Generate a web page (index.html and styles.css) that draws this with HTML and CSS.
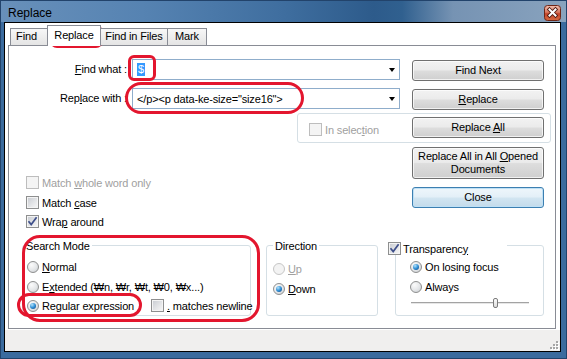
FILE: index.html
```html
<!DOCTYPE html>
<html>
<head>
<meta charset="utf-8">
<link rel="stylesheet" href="styles.css">
</head>
<body>
<div class="window">
  <div class="titlebar">
    <span class="title">Replace</span>
    <span class="close">
      <svg width="17" height="16" viewBox="0 0 17 16">
        <defs>
          <linearGradient id="cg" x1="0" y1="0" x2="0" y2="1">
            <stop offset="0" stop-color="#f2c0b2"/>
            <stop offset="0.45" stop-color="#d9785f"/>
            <stop offset="0.55" stop-color="#c2442a"/>
            <stop offset="1" stop-color="#d86a40"/>
          </linearGradient>
        </defs>
        <rect x="0.5" y="0.5" width="16" height="15" rx="3" fill="url(#cg)" stroke="#6e2617"/>
        <path d="M5.5 4.5 L11.5 10.5 M11.5 4.5 L5.5 10.5" stroke="#4f1a10" stroke-width="3.8" stroke-linecap="square"/>
        <path d="M5.5 4.5 L11.5 10.5 M11.5 4.5 L5.5 10.5" stroke="#ffffff" stroke-width="2" stroke-linecap="square"/>
      </svg>
    </span>
  </div>
  <div class="client">
    <div class="tabs">
      <div class="tab t-find">Find</div>
      <div class="tab sel">Replace</div>
      <div class="tab t-files">Find in Files</div>
      <div class="tab t-mark">Mark</div>
    </div>
    <div class="panel">
      <div class="row r1">
        <div class="lbl"><u>F</u>ind what :</div>
        <div class="combo"><span class="hl">$</span><span class="fill"></span><span class="arrow"></span></div>
        <div class="btn"><span>Find Next</span></div>
      </div>
      <div class="row r2">
        <div class="lbl">Rep<u>l</u>ace with :</div>
        <div class="combo"><span class="val">&lt;/p&gt;&lt;p data-ke-size="size16"&gt;</span><span class="fill"></span><span class="arrow"></span></div>
        <div class="btn"><span><u>R</u>eplace</span></div>
      </div>
      <div class="insel">
        <div class="chk dis"><span class="cb"></span><span>In selec<u>t</u>ion</span></div>
        <div class="btn"><span>Replace <u>A</u>ll</span></div>
      </div>
      <div class="mid">
        <div class="checks">
          <div class="chk dis"><span class="cb"></span><span>Match <u>w</u>hole word only</span></div>
          <div class="chk c2"><span class="cb"></span><span>Match <u>c</u>ase</span></div>
          <div class="chk c3"><span class="cb"><svg width="11" height="11" viewBox="0 0 11 11"><path d="M1.5 5.2 L4.2 8.6 L9.6 1.2" fill="none" stroke="#3e4f8a" stroke-width="1.7"/></svg></span><span>Wra<u>p</u> around</span></div>
        </div>
        <div class="btncol">
          <div class="btn tall"><span>Replace All in All <u>O</u>pened<br>Documents</span></div>
          <div class="btn def"><span>Close</span></div>
        </div>
      </div>
      <div class="groups">
        <div class="group g-search">
          <div class="gtitle">Search Mode</div>
          <div class="radio first"><span class="rb"></span><span><u>N</u>ormal</span></div>
          <div class="radio second"><span class="rb"></span><span>E<u>x</u>tended (₩n, ₩r, ₩t, ₩0, ₩x...)</span></div>
          <div class="radio third"><span class="rb on"></span><span class="regex">Re<u>g</u>ular expression</span><span class="cb"></span><span class="nl"><u>.</u> matches newline</span></div>
        </div>
        <div class="group g-dir">
          <div class="gtitle">Direction</div>
          <div class="radio up dis"><span class="rb"></span><span><u>U</u>p</span></div>
          <div class="radio down"><span class="rb on"></span><span><u>D</u>own</span></div>
        </div>
        <div class="group g-trans">
          <div class="ttitle"><span class="cb"><svg width="11" height="11" viewBox="0 0 11 11"><path d="M1.5 5.2 L4.2 8.6 L9.6 1.2" fill="none" stroke="#3e4f8a" stroke-width="1.7"/></svg></span><span>Transparenc<u>y</u></span></div>
          <div class="radio tr1"><span class="rb on"></span><span>On losing focus</span></div>
          <div class="radio tr2"><span class="rb"></span><span>Always</span></div>
          <div class="slider"><span class="track tl"></span><span class="thumb"></span><span class="track tr"></span></div>
        </div>
      </div>
    </div>
    <div class="status">
      <svg class="grip" width="10" height="10" viewBox="0 0 10 10">
        <g fill="#ffffff">
          <rect x="8" y="2" width="2" height="2"/><rect x="5" y="5" width="2" height="2"/><rect x="8" y="5" width="2" height="2"/>
          <rect x="2" y="8" width="2" height="2"/><rect x="5" y="8" width="2" height="2"/><rect x="8" y="8" width="2" height="2"/>
        </g>
        <g fill="#a6a6a6">
          <rect x="7" y="1" width="2" height="2"/><rect x="4" y="4" width="2" height="2"/><rect x="7" y="4" width="2" height="2"/>
          <rect x="1" y="7" width="2" height="2"/><rect x="4" y="7" width="2" height="2"/><rect x="7" y="7" width="2" height="2"/>
        </g>
      </svg>
    </div>
  </div>
  <div class="oval o-tab"></div>
  <div class="oval o-find"></div>
  <div class="oval o-repl"></div>
  <div class="oval o-search"></div>
  <div class="oval o-regex"></div>
</div>
</body>
</html>
```

FILE: styles.css
```css
* { box-sizing: border-box; }
html, body { margin: 0; padding: 0; }
body {
  width: 567px;
  height: 359px;
  overflow: hidden;
  font-family: "Liberation Sans", Arial, sans-serif;
  font-size: 11px;
  letter-spacing: -0.15px;
  color: #000;
  background: #3a6a9d;
}
u { text-decoration: underline; text-underline-offset: 1px; }

.window {
  position: relative;
  width: 567px;
  height: 359px;
  border: 1px solid #22436b;
  background: #3b6b9e;
  display: flex;
  flex-direction: column;
}

.titlebar {
  height: 21px;
  flex: none;
  display: flex;
  justify-content: space-between;
  align-items: flex-start;
  padding: 0 5px 0 7px;
  background: linear-gradient(90deg, #6890ba 0%, #5683b2 25%, #3f6e9f 50%, #2d5b8b 66%, #30608f 71%, #7693b3 80%, #89a3be 100%);
}
.title {
  font-size: 12px;
  line-height: 14px;
  margin-top: 5px;
  letter-spacing: 0;
  color: #000;
}
.close { margin-top: 4px; height: 16px; display: block; }
.close svg { display: block; }

.client {
  margin: 0 5px 6px 3px;
  height: 330px;
  border: 1px solid #000;
  background: #fff;
  display: flex;
  flex-direction: column;
}

.tabs {
  height: 22px;
  flex: none;
  display: flex;
  align-items: flex-end;
  padding-left: 5px;
  position: relative;
  z-index: 1;
}
.tab {
  height: 17px;
  border: 1px solid #898c95;
  border-bottom: none;
  line-height: 15px;
  text-align: center;
  background: linear-gradient(#f7f7f7, #e4e4e4);
  margin-right: -1px;
}
.t-find { width: 41px; padding-right: 8px; }
.tab.sel {
  width: 54px;
  height: 21px;
  margin: 0 -1px -1px -3px;
  background: #fff;
  line-height: 18px;
  position: relative;
  z-index: 2;
}
.t-files { width: 68px; }
.t-mark { width: 40px; }

.panel {
  margin: 0 4px 0 3px;
  height: 284px;
  flex: none;
  border: 1px solid #898c95;
  background: #fff;
}

.row {
  height: 21px;
  display: flex;
  align-items: flex-start;
}
.r1 { margin-top: 13px; }
.r2 { margin-top: 8px; }
.lbl {
  width: 118px;
  height: 21px;
  line-height: 21px;
  text-align: right;
}
.combo {
  margin-left: 5px;
  width: 268px;
  height: 21px;
  border: 1px solid #8fadcb;
  display: flex;
  align-items: center;
  padding: 0 4px 0 4px;
  background: #fff;
}
.hl {
  background: #3399ff;
  color: #fff;
  line-height: 13px;
  padding: 0 1px;
}
.val { white-space: nowrap; }
.fill { flex: 1; }
.arrow {
  width: 0;
  height: 0;
  border-left: 3.5px solid transparent;
  border-right: 3.5px solid transparent;
  border-top: 4px solid #000;
}

.btn {
  width: 132px;
  height: 21px;
  border: 1px solid #707070;
  border-radius: 3px;
  background: linear-gradient(#f2f2f2 0%, #ebebeb 48%, #dddddd 52%, #cfcfcf 100%);
  box-shadow: inset 0 0 0 1px rgba(255,255,255,0.7);
  display: flex;
  align-items: center;
  justify-content: center;
  text-align: center;
  line-height: 13px;
  flex: none;
}
.row .btn { margin-left: 12px; margin-top: 1px; }
.btn.tall { height: 32px; margin-top: 4px; }
.btn.def {
  margin-top: 8px;
  border-color: #3c7fb1;
  background: linear-gradient(#eef6fb 0%, #e3eff7 48%, #d2e5f1 52%, #c3dbeb 100%);
  box-shadow: inset 0 0 0 1px #bfe0f5;
}

.insel {
  margin: 4px 0 0 288px;
  width: 254px;
  height: 30px;
  border: 1px solid #d5dfe5;
  border-radius: 3px;
  display: flex;
  align-items: flex-start;
  padding: 3px 6px 0 11px;
}
.insel .chk { align-self: center; }
.insel .btn { margin-left: auto; }

.chk {
  display: flex;
  align-items: center;
  height: 13px;
  gap: 3px;
  white-space: nowrap;
}
.cb {
  width: 13px;
  height: 13px;
  flex: none;
  border: 1px solid #8e8f8f;
  background: linear-gradient(135deg, #c6cad0 0%, #e6e7e9 60%, #f7f7f7 100%);
  box-shadow: inset 0 0 0 1px #f4f4f4;
  display: flex;
  align-items: center;
  justify-content: center;
}
.cb svg { display: block; }
.dis { color: #a0a0a0; }
.dis .cb {
  border-color: #bdbdbd;
  background: #f4f4f4;
  box-shadow: none;
}

.mid { display: flex; align-items: flex-start; }
.checks { margin: 33px 0 0 17px; display: flex; flex-direction: column; }
.c2 { margin-top: 7px; }
.c3 { margin-top: 6px; }
.btncol { margin-left: auto; margin-right: 11px; display: flex; flex-direction: column; }

.groups { display: flex; align-items: flex-start; margin-top: 17px; }
.group {
  height: 71px;
  border: 1px solid #d5dfe5;
  border-radius: 3px;
  display: flex;
  flex-direction: column;
  align-items: flex-start;
}
.g-search { margin-left: 13px; width: 229px; padding-left: 4px; }
.g-dir { margin-left: 15px; width: 112px; padding-left: 6px; }
.g-trans { margin-left: 17px; width: 149px; padding-left: 14px; }

.gtitle {
  margin: -6px 0 0 -3px;
  padding: 0 2px;
  line-height: 13px;
  background: #fff;
}
.g-dir .gtitle { margin-left: 0; }
.ttitle {
  margin: -4px 0 0 -22px;
  width: 119px;
  height: 13px;
  background: #fff;
  display: flex;
  align-items: center;
  gap: 2px;
}

.radio {
  display: flex;
  align-items: center;
  height: 13px;
  gap: 3px;
  white-space: nowrap;
}
.first { margin-top: 7px; }
.second { margin-top: 7px; }
.third { margin-top: 6px; }
.up { margin-top: 9px; }
.down { margin-top: 7px; }
.tr1 { margin-top: 5px; }
.tr2 { margin-top: 7px; }
.regex { width: 106px; }
.nl { margin-left: 0; }

.rb {
  width: 12px;
  height: 12px;
  flex: none;
  border-radius: 50%;
  border: 1px solid #8e8f8f;
  background: radial-gradient(circle at 35% 30%, #fbfbfb 0%, #e4e6e8 55%, #c4c8cc 100%);
  display: flex;
  align-items: center;
  justify-content: center;
}
.rb.on::after {
  content: "";
  width: 6px;
  height: 6px;
  border-radius: 50%;
  background: radial-gradient(circle at 35% 30%, #b4e3fb 0%, #2f8fd6 50%, #0f3d74 100%);
}
.dis .rb {
  border-color: #c6c6c6;
  background: #f3f3f3;
}

.slider {
  margin: 4px 0 0 1px;
  width: 118px;
  height: 12px;
  display: flex;
  align-items: center;
}
.track {
  height: 2px;
  border-top: 1px solid #a3a3a3;
  background: #e6e6e6;
}
.tl { width: 82px; }
.tr { width: 31px; }
.thumb {
  width: 5px;
  height: 10px;
  border: 1px solid #7b7b7b;
  border-radius: 2px;
  background: linear-gradient(#fbfbfb, #dcdcdc);
}

.status {
  flex: 1;
  margin-top: 1px;
  background: #f0efee;
  display: flex;
  justify-content: flex-end;
  align-items: flex-end;
  padding: 0 1px 1px 0;
}
.grip { display: block; }

.oval {
  position: absolute;
  border: 3px solid #e3162e;
}
.o-tab { left: 49px; top: 24px; width: 53px; height: 23px; border-radius: 7px; }
.o-find { left: 127px; top: 54px; width: 28px; height: 26px; border-radius: 6px; }
.o-repl { left: 124px; top: 81px; width: 179px; height: 32px; border-radius: 16px; }
.o-search { left: 21px; top: 234px; width: 238px; height: 87px; border-radius: 18px; }
.o-regex { left: 16px; top: 292px; width: 125px; height: 24px; border-radius: 12px; }
```
